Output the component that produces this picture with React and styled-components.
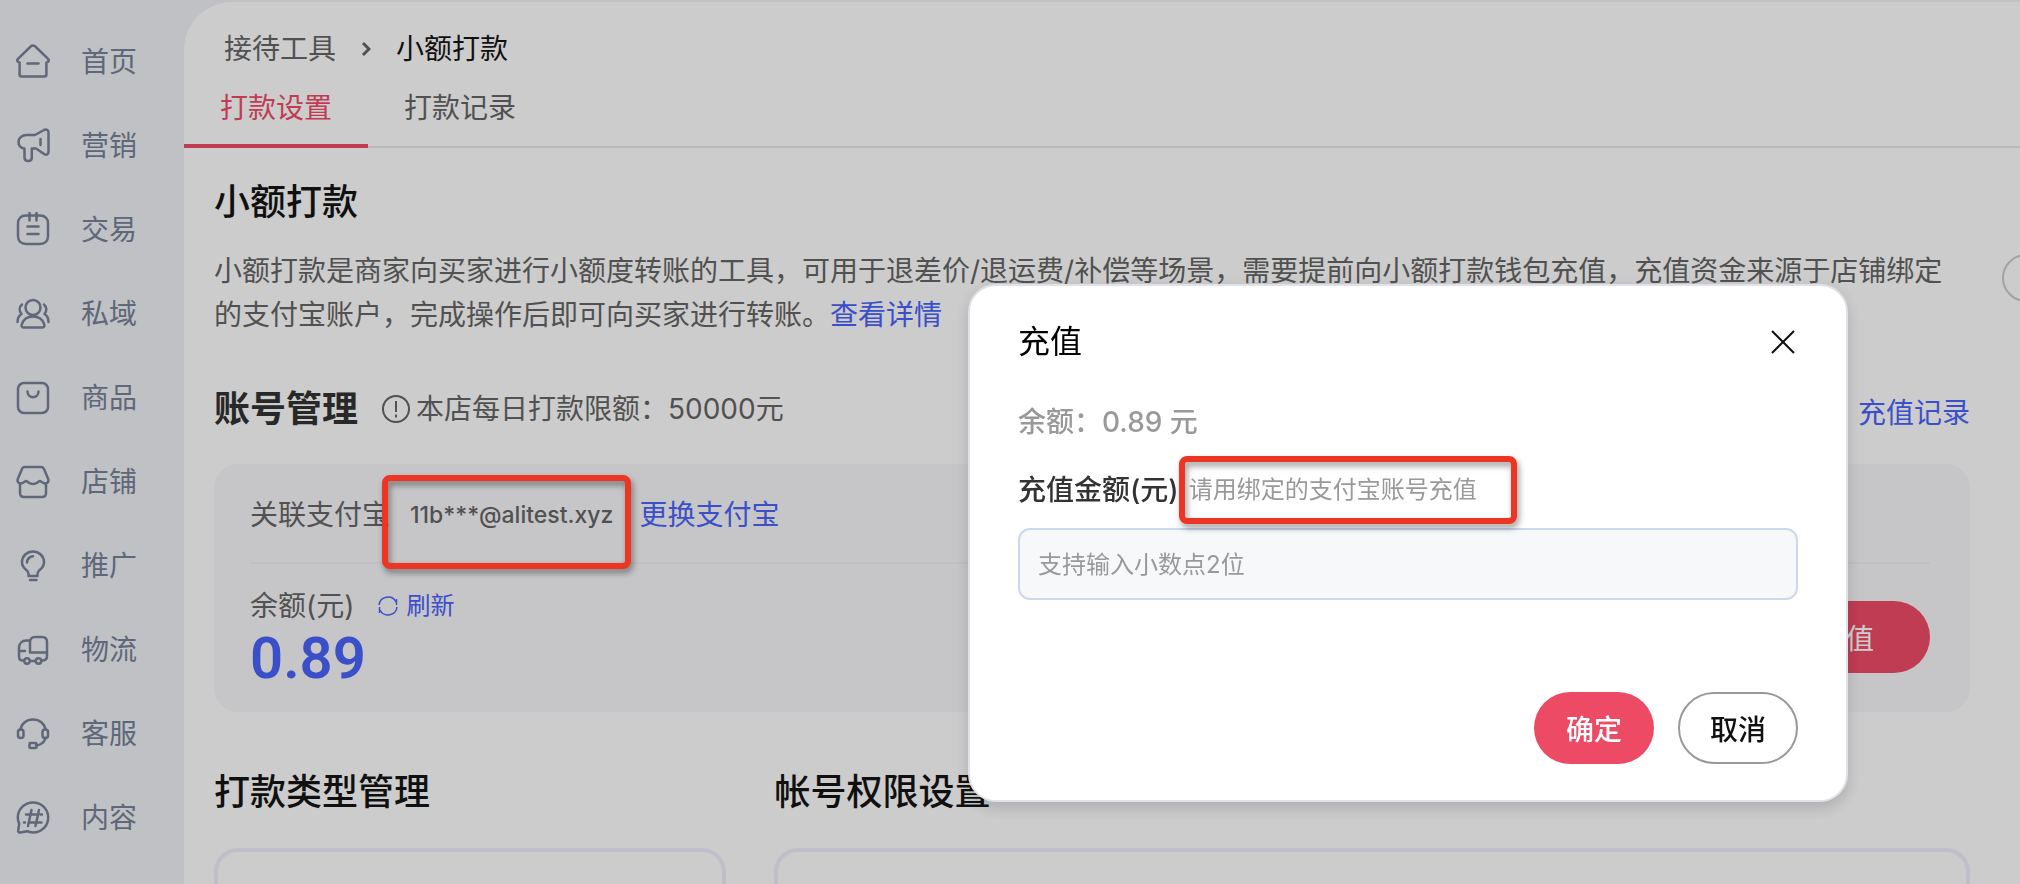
import styled, { createGlobalStyle } from 'styled-components';
import { useState } from 'react';

const navItems = [
    { id: 'home', label: '首页' },
    { id: 'marketing', label: '营销' },
    { id: 'trade', label: '交易' },
    { id: 'private', label: '私域' },
    { id: 'goods', label: '商品' },
    { id: 'shop', label: '店铺' },
    { id: 'promote', label: '推广' },
    { id: 'logistics', label: '物流' },
    { id: 'service', label: '客服' },
    { id: 'content', label: '内容' },
];

const icons = {
    home: (
        <>
            <path d="M17 1.500c-.8 0-1.600.4-2.300 1L1.900 14.800c-1.200 1.300-.8 2.800.8 3.400l.9.3V30.500c0 1.300.8 2 2 2h22.800c1.200 0 2-.7 2-2V18.500l.9-.3c1.600-.6 2-2.100.8-3.400L19.300 2.500c-.7-.6-1.500-1-2.300-1z" />
            <path d="M11.500 19.500h11" />
        </>
    ),
    marketing: (
        <>
            <path d="M10.500 7h8.500L28 2c2.500-1.200 4.500-.2 4.500 2.500v19.500c0 2.500-2.200 3.300-4 2.200L20 20.500h-4.200V29.500c0 2.200-1.300 3.500-3.500 3.500s-3.800-1.300-3.800-3.500V20.500C4.500 20 2.500 17.500 2.500 14c0-4 3.500-7 8-7z" />
            <path d="M24.500 11v6" />
        </>
    ),
    trade: (
        <>
            <path d="M10 3.500h14c5 0 8 3 8 8V24c0 5-3 8-8 8H10c-5 0-8-3-8-8V11.500c0-5 3-8 8-8z" />
            <path d="M13.500 1v7.500M20.500 1v7.500M11.500 14.500h11M11.500 22h11" />
        </>
    ),
    private: (
        <g transform="translate(0 1)">
            <circle cx="17" cy="10.500" r="7.500" />
            <path d="M8.500 30.500c-2.800 0-3.500-1.200-2.500-3.800C7.800 22 12 19.500 17 19.500s9.200 2.500 11 7.200c1 2.600.3 3.800-2.500 3.800z" />
            <path d="M6 7.500C3 10 3 14 5.500 17 3 18.500 1.500 21 1.500 25M28 7.500c3 2.500 3 6.500.5 9.500 2.500 1.500 4 4 4 8" />
        </g>
    ),
    goods: (
        <g transform="translate(0 1)">
            <rect x="2" y="2" width="30" height="30" rx="6" />
            <path d="M11.500 10.500c0 7.500 11 7.500 11 0" />
        </g>
    ),
    shop: (
        <g transform="translate(0 1)">
            <path d="M9 2h16c1.500 0 2.300.6 2.900 1.700l4.200 10c1 3-.6 4.800-3.100 4.800-2 0-3-1.500-4.800-2.500-2.200 0-3 3-7.200 3s-5-3-7.200-3c-1.800 1-2.800 2.500-4.800 2.500-2.500 0-4.100-1.800-3.100-4.800l4.200-10C6.700 2.600 7.500 2 9 2z" />
            <path d="M4 18.500V28c0 2.500 1.500 4 4 4h18c2.500 0 4-1.500 4-4v-9.500" />
        </g>
    ),
    promote: (
        <g transform="translate(0 1)">
            <path d="M12.500 27v-2.500c0-1.500-1-2.500-2.200-3.600C7.500 18.700 6 16.500 6 13.200 6 7 11 2.500 17 2.500s11 4.500 11 10.700c0 3.300-1.500 5.500-4.300 7.700-1.200 1.100-2.200 2.100-2.200 3.600V27z" />
            <path d="M11 13.500c.2-3.300 2.200-5.600 6-6.200M14 31h6.500" />
        </g>
    ),
    logistics: (
        <>
            <path d="M14 8.500h-3.500C6 8.500 3 11.500 3 16v8.500c0 2.500 1.500 4 4 4M14.500 29h4.500M26 28.500c3 0 5-1.500 5-4.500V10c0-3.200-1.800-5-5-5h-7c-3.200 0-5 1.800-5 5v10.500h16.500M3 19h6" />
            <circle cx="11" cy="29" r="2.700" />
            <circle cx="22.500" cy="29" r="2.700" />
        </>
    ),
    service: (
        <g transform="translate(0 1)">
            <path d="M4.500 12.500C5.500 6.500 10.500 2.500 17 2.500s11.500 4 12.500 10M29.500 21c-1.200 4.500-4.500 7-9.500 7.500" />
            <rect x="2" y="12.500" width="5.500" height="8.500" rx="2.500" />
            <rect x="26.500" y="12.500" width="5.500" height="8.500" rx="2.500" />
            <rect x="13.500" y="26" width="7" height="5" rx="1" />
        </g>
    ),
    content: (
        <>
            <path d="M17 2.500c8.500 0 15.200 6.500 15.200 15s-6.700 15-15.200 15c-2.500 0-4.500-.5-6-1.300L4.500 32.500C2.800 32.800 2 31.800 2.200 30.300l1-6.500C2.300 21.800 1.800 20 1.800 17.500c0-8.500 6.700-15 15.200-15z" />
            <path d="M15.500 10l-3.500 16M23 10l-3.500 16M10 14.500h11M13.500 22.500h12M24.500 14.500h1.500M8 22.500h1" />
        </>
    ),
};

const App = () => {
    const [amount, setAmount] = useState('');
    const [open, setOpen] = useState(true);

    const submitForm = (e) => {
        e.preventDefault();
        setOpen(false);
    }

    return (
        <>
            <GlobalStyle />
            <Page>
                <Sidebar>
                    {navItems.map((item) => (
                        <NavLink href="#" key={item.id}>
                            <NavIcon viewBox="0 0 34 36">{icons[item.id]}</NavIcon>
                            {item.label}
                        </NavLink>
                    ))}
                </Sidebar>

                <Main>
                    <Breadcrumb>
                        <CrumbLink href="#">接待工具</CrumbLink>
                        <Chevron viewBox="0 0 10 16"><path d="M2 2l6 6-6 6" /></Chevron>
                        <span>小额打款</span>
                    </Breadcrumb>

                    <Tabs>
                        <Tab $active>打款设置</Tab>
                        <Tab>打款记录</Tab>
                    </Tabs>

                    <Content>
                        <Title>小额打款</Title>
                        <Description>
                            小额打款是商家向买家进行小额度转账的工具，可用于退差价/退运费/补偿等场景，需要提前向小额打款钱包充值，充值资金来源于店铺绑定的支付宝账户，完成操作后即可向买家进行转账。<Link href="#">查看详情</Link>
                        </Description>

                        <AccountHeader>
                            <Title $dark>账号管理</Title>
                            <Limit>
                                <InfoIcon viewBox="0 0 28 28">
                                    <circle cx="14" cy="14" r="13" />
                                    <path d="M14 6v11M14 19.500v3" />
                                </InfoIcon>
                                本店每日打款限额：50000元
                            </Limit>
                            <RecordLink href="#">充值记录</RecordLink>
                        </AccountHeader>

                        <Card>
                            <AlipayRow>
                                <span>关联支付宝</span>
                                <Marked>
                                    <Email>11b***@alitest.xyz</Email>
                                    <AccountMark />
                                </Marked>
                                <Link href="#">更换支付宝</Link>
                            </AlipayRow>
                            <BalanceRow>
                                <div>
                                    <BalanceLabel>
                                        余额(元)
                                        <Refresh>
                                            <RefreshIcon viewBox="0 0 20 20">
                                                <path d="M1 9A9 9 0 0 1 18 6M19 11A9 9 0 0 1 2 14" />
                                                <path d="M18.500 3v6M1.500 17v-6" />
                                            </RefreshIcon>
                                            刷新
                                        </Refresh>
                                    </BalanceLabel>
                                    <Balance>0.89</Balance>
                                </div>
                                <RechargeButton onClick={() => setOpen(true)}>充值</RechargeButton>
                            </BalanceRow>
                        </Card>

                        <Panels>
                            <section>
                                <Title>打款类型管理</Title>
                                <PanelBox />
                            </section>
                            <section>
                                <Title>帐号权限设置</Title>
                                <PanelBox />
                            </section>
                        </Panels>
                    </Content>
                </Main>
                <SideHandle aria-label="展开" />
            </Page>

            {open && (
                <Overlay>
                    <Dialog role="dialog" aria-labelledby="dialog-title" onSubmit={submitForm}>
                        <DialogHeader>
                            <DialogTitle id="dialog-title">充值</DialogTitle>
                            <CloseButton type="button" aria-label="关闭" onClick={() => setOpen(false)}>
                                <svg width="24" height="24" viewBox="0 0 24 24"><path d="M1 1l22 22M23 1L1 23" /></svg>
                            </CloseButton>
                        </DialogHeader>
                        <DialogBalance>余额：0.89 元</DialogBalance>
                        <FieldHeader>
                            <Label htmlFor="amount">充值金额(元)</Label>
                            <Marked>
                                <Hint>请用绑定的支付宝账号充值</Hint>
                                <HintMark />
                            </Marked>
                        </FieldHeader>
                        <Input id="amount" placeholder="支持输入小数点2位" value={amount} onChange={(e) => { setAmount(e.target.value) }} />
                        <Actions>
                            <Button $primary>确定</Button>
                            <Button type="button" onClick={() => setOpen(false)}>取消</Button>
                        </Actions>
                    </Dialog>
                </Overlay>
            )}
        </>
    )
};

const GlobalStyle = createGlobalStyle`
* {
box-sizing: border-box;
}

body {
margin: 0;
font-family: Inter, 'Noto Sans CJK SC', sans-serif;
font-size: 28px;
line-height: 44px;
color: #666666;
}

h1, h2, p {
margin: 0;
}

button, input {
font-family: inherit;
}
`;

const Page = styled.div`
position: relative;
display: flex;
height: 100vh;
overflow: hidden;
padding-top: 2px;
background: #f0f2f7;
`;

const Sidebar = styled.nav`
width: 184px;
flex-shrink: 0;
padding-top: 18px;
`;

const NavLink = styled.a`
display: flex;
align-items: center;
gap: 31px;
height: 84px;
padding-left: 16px;
color: #778196;
text-decoration: none;
`;

const NavIcon = styled.svg`
width: 34px;
height: 36px;
fill: none;
stroke: currentColor;
stroke-width: 2.5;
stroke-linecap: round;
stroke-linejoin: round;
`;

const Main = styled.main`
flex: 1;
min-width: 0;
background: #ffffff;
border-top-left-radius: 48px;
`;

const Breadcrumb = styled.div`
display: flex;
align-items: center;
padding: 25px 40px 0;
color: #151515;
`;

const CrumbLink = styled.a`
color: #666666;
text-decoration: none;
`;

const Chevron = styled.svg`
width: 10px;
height: 16px;
margin: 0 25px;
fill: none;
stroke: #666666;
stroke-width: 3;
`;

const Tabs = styled.div`
display: flex;
height: 77px;
border-bottom: 2px solid #e4e6ee;
`;

const Tab = styled.button`
width: 184px;
height: 77px;
padding: 0 0 4px;
background: none;
border: none;
border-bottom: 4px solid ${({ $active }) => $active ? '#f04c68' : 'transparent'};
font-size: 28px;
color: ${({ $active }) => $active ? '#f04c68' : '#666666'};
`;

const Content = styled.div`
padding: 28px 50px 0 30px;
`;

const Title = styled.h2`
font-size: 36px;
line-height: 52px;
font-weight: ${({ $dark }) => $dark ? 700 : 500};
color: ${({ $dark }) => $dark ? '#333333' : '#151515'};
`;

const Description = styled.p`
padding-top: 21px;
`;

const Link = styled.a`
color: #4a63fb;
text-decoration: none;
`;

const RecordLink = styled(Link)`
align-self: flex-end;
`;

const AccountHeader = styled.div`
display: flex;
align-items: center;
padding: 46px 0 29px;
`;

const Limit = styled.div`
display: flex;
align-items: center;
gap: 6px;
flex: 1;
padding-left: 24px;
`;

const InfoIcon = styled.svg`
width: 28px;
height: 28px;
fill: none;
stroke: currentColor;
stroke-width: 2;
`;

const Card = styled.div`
padding: 0 40px 0 36px;
background: #f8f8fa;
border-radius: 24px;
`;

const AlipayRow = styled.div`
display: flex;
align-items: center;
height: 100px;
padding-top: 4px;
border-bottom: 2px solid #f2f2f6;
`;

const Marked = styled.div`
position: relative;
`;

const Mark = styled.div`
position: absolute;
z-index: 2;
border: 6px solid #ed3524;
border-radius: 8px;
filter: drop-shadow(2px 4px 3px rgba(0, 0, 0, 0.4));
pointer-events: none;
`;

const AccountMark = styled(Mark)`
inset: -18px 8px -32px -8px;
`;

const HintMark = styled(Mark)`
inset: -12px -40px -12px -10px;
`;

const Email = styled.div`
padding: 0 26px 0 20px;
font-size: 23px;
font-weight: 500;
`;

const BalanceRow = styled.div`
display: flex;
justify-content: space-between;
align-items: flex-start;
padding-bottom: 24px;
`;

const BalanceLabel = styled.div`
display: flex;
align-items: center;
gap: 24px;
padding-top: 20px;
`;

const Refresh = styled.button`
display: flex;
align-items: center;
gap: 8px;
padding: 0;
border: none;
background: none;
font-size: 24px;
line-height: 32px;
color: #4a63fb;
`;

const RefreshIcon = styled.svg`
width: 20px;
height: 20px;
fill: none;
stroke: currentColor;
stroke-width: 1.5;
`;

const Balance = styled.div`
font-family: Roboto, sans-serif;
font-size: 58px;
line-height: 60px;
font-weight: 600;
color: #4a63fb;
`;

const RechargeButton = styled.button`
height: 72px;
margin-top: 37px;
padding: 0 56px;
border: none;
border-radius: 36px;
background: #f04c68;
font-size: 28px;
color: #ffffff;
`;

const Panels = styled.div`
display: grid;
grid-template-columns: 3fr 7fr;
gap: 48px;
padding-top: 54px;
`;

const PanelBox = styled.div`
height: 120px;
margin-top: 30px;
border: 4px solid #eeeffa;
border-radius: 24px;
`;

const SideHandle = styled.button`
position: absolute;
top: 254px;
right: -30px;
width: 48px;
height: 48px;
border: 2px solid #cccccc;
border-radius: 24px;
background: none;
`;

const Overlay = styled.div`
position: fixed;
inset: 0;
background: rgba(0, 0, 0, 0.2);
`;

const Dialog = styled.form`
position: absolute;
top: 284px;
right: 172px;
width: 880px;
padding: 34px 48px 36px;
background: #ffffff;
border: 2px solid #e0e1e9;
border-radius: 28px;
box-shadow: 0 6px 16px rgba(0, 0, 0, 0.16);
`;

const DialogHeader = styled.div`
display: flex;
justify-content: space-between;
align-items: center;
`;

const DialogTitle = styled.h1`
font-size: 32px;
line-height: 44px;
font-weight: 400;
color: #000000;
`;

const CloseButton = styled.button`
padding: 0 3px;
border: none;
background: none;
line-height: 0;
stroke: #111111;
stroke-width: 2;
`;

const DialogBalance = styled.p`
padding-top: 36px;
font-weight: 500;
color: #999999;
`;

const FieldHeader = styled.div`
display: flex;
align-items: center;
gap: 10px;
padding: 24px 0 16px;
`;

const Label = styled.label`
font-weight: 500;
color: #333333;
`;

const Hint = styled.div`
font-size: 24px;
color: #999999;
`;

const Input = styled.input`
width: 100%;
height: 72px;
padding: 0 18px;
background: #f7f8fa;
border: 2px solid #cfd7ec;
border-radius: 12px;
font-size: 24px;

&::placeholder {
color: #999999;
}
`;

const Actions = styled.div`
display: flex;
justify-content: flex-end;
gap: 24px;
padding-top: 92px;
`;

const Button = styled.button`
width: 120px;
height: 72px;
padding: 0;
border: ${({ $primary }) => $primary ? 'none' : '2px solid #999999'};
border-radius: 36px;
background: ${({ $primary }) => $primary ? '#ed4a65' : '#ffffff'};
font-size: 28px;
font-weight: 500;
color: ${({ $primary }) => $primary ? '#ffffff' : '#111111'};
`;

export default App;
